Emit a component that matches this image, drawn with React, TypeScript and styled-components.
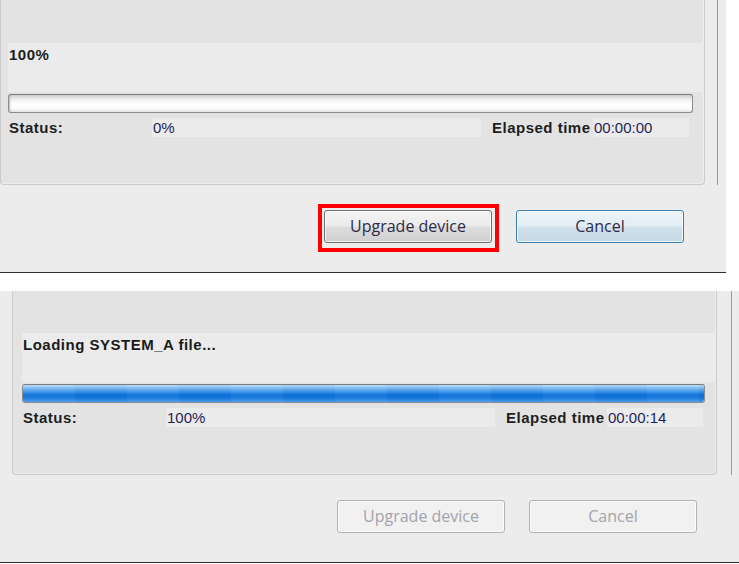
import React from 'react'
import styled, { createGlobalStyle, css } from 'styled-components'

const GlobalStyle = createGlobalStyle`
  html, body {
    margin: 0;
    padding: 0;
    background: #ffffff;
  }
  body {
    width: 739px;
    height: 564px;
    overflow: hidden;
    font-family: 'Liberation Sans', Arial, sans-serif;
  }
  * {
    box-sizing: border-box;
  }
`

const Page = styled.div`
  display: flex;
  flex-direction: column;
  gap: 18px;
`

const Window = styled.div<{ $width: number }>`
  width: ${({ $width }) => $width}px;
  display: flex;
  flex-direction: column;
  background: #ececec;
  border-bottom: 1px solid #2f2f2f;
`

const Upper = styled.div<{ $inset: number }>`
  display: flex;
  padding-left: ${({ $inset }) => $inset}px;
`

const GroupBox = styled.div<{ $top: number; $pad: number }>`
  width: 705px;
  display: flex;
  flex-direction: column;
  padding: ${({ $top }) => $top}px 0 47px ${({ $pad }) => $pad}px;
  background: #e3e3e3;
  border: 1px solid #cbcbcb;
  border-top: none;
  border-radius: 0 0 4px 4px;
  box-shadow: inset -1px -1px 0 #ededed;
`

const Gutter = styled.div<{ $width: number }>`
  width: ${({ $width }) => $width}px;
  border-right: 1px solid #9a9a9a;
`

const MessagePanel = styled.div`
  height: 49px;
  padding: 3px 0 0 1px;
  background: #ebebeb;
  color: #1b1b1b;
  font-size: 15px;
  font-weight: bold;
  letter-spacing: 0.5px;
  line-height: 18px;
  white-space: nowrap;
`

const Track = styled.div`
  height: 19px;
  margin: 2px 11px 0 0;
  border: 1px solid #8c8c8c;
  border-top-color: #7a7a7a;
  border-radius: 3px;
  overflow: hidden;
  background: linear-gradient(#cfcfcf 0%, #f2f2f2 30%, #ffffff 55%, #fafafa 80%, #e6e6e6 100%);
  box-shadow: inset 2px 0 2px -1px #b8b8b8;
`

const Fill = styled.div`
  height: 100%;
  background:
    repeating-linear-gradient(90deg, rgba(255, 255, 255, 0.04) 0 52px, rgba(0, 40, 120, 0.025) 52px 104px),
    linear-gradient(#bcdcf8 0%, #6fb3f0 22%, #2b88e6 45%, #0a6ed6 60%, #1c7ce0 80%, #4a9eec 100%);
  border-radius: 2px;
`

const StatusRow = styled.div`
  display: grid;
  grid-template-columns: 144px 329px 112px 96px;
  height: 19px;
  margin-top: 5px;
`

const Caption = styled.div<{ $lead?: number }>`
  padding-left: ${({ $lead }) => $lead ?? 1}px;
  color: #1e1e1e;
  font-size: 15px;
  font-weight: bold;
  letter-spacing: 0.5px;
  line-height: 19px;
  white-space: nowrap;
`

const Readout = styled.div`
  padding-left: 1px;
  background: #ebebeb;
  color: #1f1f58;
  font-size: 15px;
  line-height: 19px;
  white-space: nowrap;
`

const Footer = styled.div`
  height: 87px;
  display: flex;
  justify-content: flex-end;
  align-items: flex-start;
  gap: 24px;
  padding: 25px 42px 0 0;
`

/* red annotation frame round the button; negative margin keeps the layout as is */
const Marker = styled.span`
  display: inline-flex;
  margin: -6px -7px -9px -6px;
  padding: 2px 3px 5px 2px;
  border: 4px solid #ff0000;
`

type ButtonTone = 'normal' | 'hot' | 'disabled'

const tones = {
  normal: css`
    border-color: #707070;
    background: linear-gradient(#f3f3f3 0%, #ebebeb 48%, #dddddd 52%, #cfcfcf 100%);
    color: #2e2a48;
  `,
  hot: css`
    border-color: #3c7fb1;
    background: linear-gradient(#ecf4f9 0%, #e2edf4 48%, #d2e2ec 52%, #c4d8e4 100%);
    color: #2e2a48;
  `,
  disabled: css`
    border-color: #adb2b5;
    background: #f1f1f1;
    color: #a3a3ab;
  `,
}

const DialogButton = styled.button<{ $tone: ButtonTone }>`
  width: 168px;
  height: 33px;
  padding: 0;
  border: 1px solid;
  border-radius: 3px;
  box-shadow: inset 0 0 0 1px rgba(255, 255, 255, 0.7);
  font-family: 'Open Sans', 'Noto Sans', sans-serif;
  font-size: 16px;
  line-height: 31px;
  cursor: default;
  ${({ $tone }) => tones[$tone]}
`

type Run = {
  width: number
  inset: number
  pad: number
  top: number
  gutter: number
  message: string
  progress: number
  status: string
  elapsed: string
  busy: boolean
}

const runs: Run[] = [
  {
    width: 726,
    inset: 0,
    pad: 7,
    top: 43,
    gutter: 13,
    message: '100%',
    progress: 0,
    status: '0%',
    elapsed: '00:00:00',
    busy: false,
  },
  {
    width: 739,
    inset: 12,
    pad: 9,
    top: 42,
    gutter: 15,
    message: 'Loading SYSTEM_A file...',
    progress: 100,
    status: '100%',
    elapsed: '00:00:14',
    busy: true,
  },
]

const UpgradeDialog = ({ run }: { run: Run }) => {
  const upgrade = (
    <DialogButton $tone={run.busy ? 'disabled' : 'normal'} disabled={run.busy}>
      Upgrade device
    </DialogButton>
  )

  return (
    <Window $width={run.width}>
      <Upper $inset={run.inset}>
        <GroupBox $top={run.top} $pad={run.pad}>
          <MessagePanel>{run.message}</MessagePanel>
          <Track>
            <Fill style={{ width: `${run.progress}%` }} />
          </Track>
          <StatusRow>
            <Caption>Status:</Caption>
            <Readout>{run.status}</Readout>
            <Caption $lead={11}>Elapsed time</Caption>
            <Readout>{run.elapsed}</Readout>
          </StatusRow>
        </GroupBox>
        <Gutter $width={run.gutter} />
      </Upper>
      <Footer>
        {run.busy ? upgrade : <Marker>{upgrade}</Marker>}
        <DialogButton $tone={run.busy ? 'disabled' : 'hot'} disabled={run.busy}>
          Cancel
        </DialogButton>
      </Footer>
    </Window>
  )
}

const App = () => (
  <>
    <GlobalStyle />
    <Page>
      {runs.map((run) => (
        <UpgradeDialog key={run.message} run={run} />
      ))}
    </Page>
  </>
)

export default App
